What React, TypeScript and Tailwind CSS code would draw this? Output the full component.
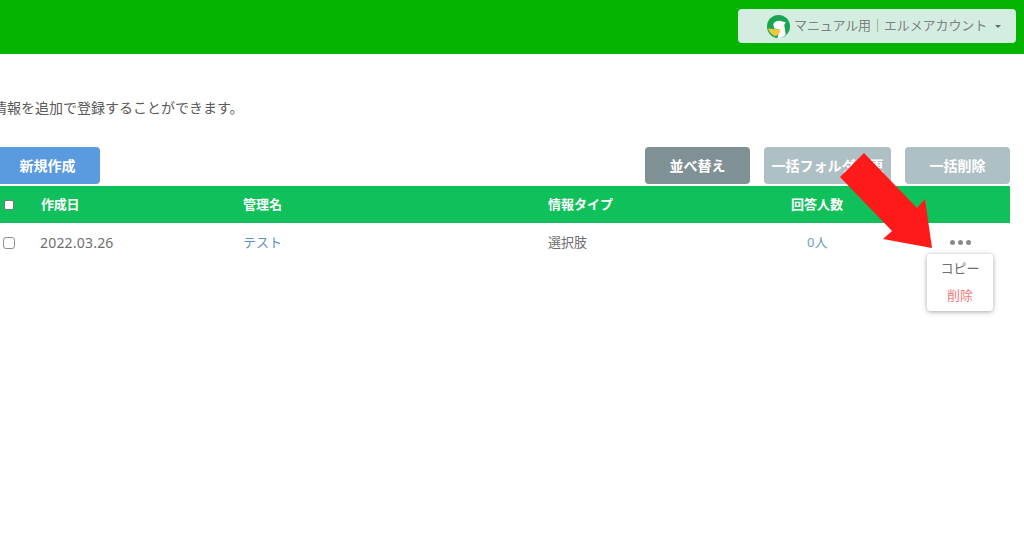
import React from "react";

const font = { fontFamily: '"Noto Sans", "Noto Sans CJK JP", sans-serif' };

function Logo() {
  return (
    <svg width="23" height="23" viewBox="0 0 22 22" className="shrink-0">
      <circle cx="11" cy="11" r="11" fill="#17a64f" />
      <path d="M6 9 Q7 5.5 12 5.5 L18 7 L16.5 9.5 L18 19 Q14 23 10 21.8 L12 14 L7 13 Z" fill="#ffffff" />
      <path d="M0.8 13 L13 14 Q12 20 7 20 Q3 18 0.8 13 Z" fill="#efc93a" />
    </svg>
  );
}

function Btn({ children, className }: { children: React.ReactNode; className: string }) {
  return (
    <button className={`h-[37px] rounded text-[14px] font-bold text-white ${className}`}>{children}</button>
  );
}

export default function App() {
  return (
    <div style={font} className="relative h-[538px] w-[1024px] overflow-hidden bg-white text-[#6e6e6e]">
      <header className="flex h-[54px] items-center justify-end bg-[#04b400] pb-[2px] pr-[8px]">
        <div className="flex h-[34px] w-[278px] items-center rounded bg-[#d3eee0] pl-[29px] text-[13px] text-[#808080]">
          <Logo />
          <span className="ml-[4px] whitespace-nowrap tracking-[-0.1px]">マニュアル用｜エルメアカウント</span>
          <span className="ml-[8px] h-0 w-0 border-x-[3px] border-t-[3px] border-x-transparent border-t-[#666]" />
        </div>
      </header>

      <main className="pr-[14px]">
        <p className="ml-[-7px] mt-[44px] h-[20px] whitespace-nowrap text-[14px] leading-[20px] text-[#5a5a5a]">情報を追加で登録することができます。</p>

        <div className="mt-[29px] flex items-center">
          <Btn className="ml-[-5px] w-[105px] bg-[#5a9ade]">新規作成</Btn>
          <div className="ml-auto flex gap-[14px]">
            <Btn className="w-[105px] bg-[#7f9194]">並べ替え</Btn>
            <Btn className="w-[127px] bg-[#afc0c4]">一括フォルダ変更</Btn>
            <Btn className="w-[105px] bg-[#afc0c4]">一括削除</Btn>
          </div>
        </div>

        <div className="mt-[2px] grid h-[37px] grid-cols-[41px_202px_305px_228px_1fr] items-center bg-[#10c05a] text-[13px] font-bold text-white">
          <span className="flex pl-[4px]">
            <span className="h-[10px] w-[10px] rounded-[2px] border border-[#777] bg-white" />
          </span>
          <span className="tracking-[-0.3px]">作成日</span>
          <span>管理名</span>
          <span>情報タイプ</span>
          <span className="ml-[15px]">回答人数</span>
        </div>

        <div className="grid h-[39px] grid-cols-[40px_203px_305px_228px_1fr] items-center text-[14px]">
          <span className="flex pl-[3px]">
            <span className="h-[12px] w-[12px] rounded-[3px] border border-[#909090] bg-white" />
          </span>
          <span className="tracking-[0.2px]">2022.03.26</span>
          <span className="text-[13px] text-[#5b93c7]">テスト</span>
          <span className="text-[13px]">選択肢</span>
          <div className="flex items-center">
            <span className="ml-[31px] text-[13px] text-[#6ea0d2]">0人</span>
            <span className="ml-[123px] flex gap-[3px]">
              <span className="h-[5px] w-[5px] rounded-full bg-[#8a8a8a]" />
              <span className="h-[5px] w-[5px] rounded-full bg-[#8a8a8a]" />
              <span className="h-[5px] w-[5px] rounded-full bg-[#8a8a8a]" />
            </span>
          </div>
        </div>
      </main>

      <div className="absolute left-[927px] top-[254px] flex h-[57px] w-[66px] flex-col items-center rounded bg-white pt-[5px] text-[13px] shadow-[0_1px_5px_rgba(0,0,0,0.35)]">
        <span className="h-[18px] leading-[18px] text-[#6e6e6e]">コピー</span>
        <span className="mt-[9px] h-[18px] leading-[18px] text-[#f47a7a]">削除</span>
      </div>

      <svg className="absolute left-0 top-0" width="1024" height="538">
        <polygon points="864,153 840,177 892,231 883,239 932,248 925,199 917,208" fill="#ff1a1a" />
      </svg>
    </div>
  );
}
